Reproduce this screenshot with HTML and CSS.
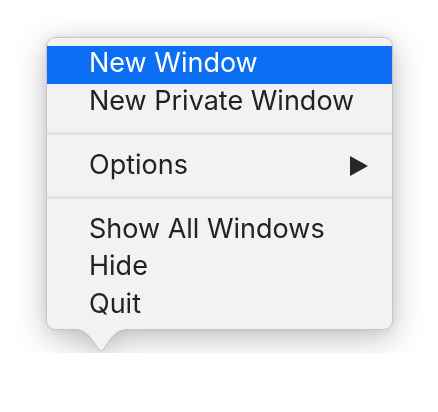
FILE: index.html
```html
<!DOCTYPE html>
<html>
<head>
<meta charset="utf-8">
<link rel="stylesheet" href="styles.css">
</head>
<body>
<div class="popover">
  <div class="menu">
    <div class="item active">New Window</div>
    <div class="item">New Private Window</div>
    <div class="sep"></div>
    <div class="item sub">Options
      <svg class="chev" width="18" height="20" viewBox="0 0 18 20"><polygon points="0,0 18,10 0,20" fill="#262626"/></svg>
    </div>
    <div class="sep"></div>
    <div class="item">Show All Windows</div>
    <div class="item">Hide</div>
    <div class="item">Quit</div>
  </div>
  <svg class="tail" width="56" height="24" viewBox="0 0 56 24">
    <path d="M0,0 C9,0 13,3 19,10 L25.5,19.5 Q28,23 30.5,19.5 L37,10 C43,3 47,0 56,0 Z" fill="#f2f2f2"/>
    <path d="M0,0.5 C9,0.5 13,3.5 19,10.5 L25.5,20 Q28,23.5 30.5,20 L37,10.5 C43,3.5 47,0.5 56,0.5" fill="none" stroke="#c4c4c4" stroke-width="1"/>
  </svg>
</div>
</body>
</html>
```
FILE: styles.css
```css
html, body {
  margin: 0;
  background: #ffffff;
}
body {
  padding: 37px 0 0 46px;
  font-family: Inter, "Open Sans", "Liberation Sans", sans-serif;
}
.popover {
  width: 347px;
  filter: drop-shadow(0 8px 16px rgba(0,0,0,0.24)) drop-shadow(0 0 4px rgba(0,0,0,0.08));
}
.menu {
  box-sizing: border-box;
  width: 347px;
  background: #f2f2f2;
  border: 1px solid #c6c6c6;
  border-radius: 9px;
  padding: 8px 0 5px;
}
.item {
  box-sizing: border-box;
  display: flex;
  align-items: center;
  justify-content: space-between;
  height: 37.5px;
  padding: 0 24px 4px 42px;
  font-size: 27px;
  color: #222222;
}
.item.active {
  background: #0b6ef3;
  color: #ffffff;
}
.chev {
  margin-top: 4px;
}
.sep {
  height: 26.5px;
  display: flex;
  align-items: center;
}
.sep::before {
  content: "";
  display: block;
  width: 100%;
  height: 3px;
  background: #e2e2e2;
  margin-top: -2px;
}
.tail {
  display: block;
  margin: -1px 0 0 27px;
}
```
